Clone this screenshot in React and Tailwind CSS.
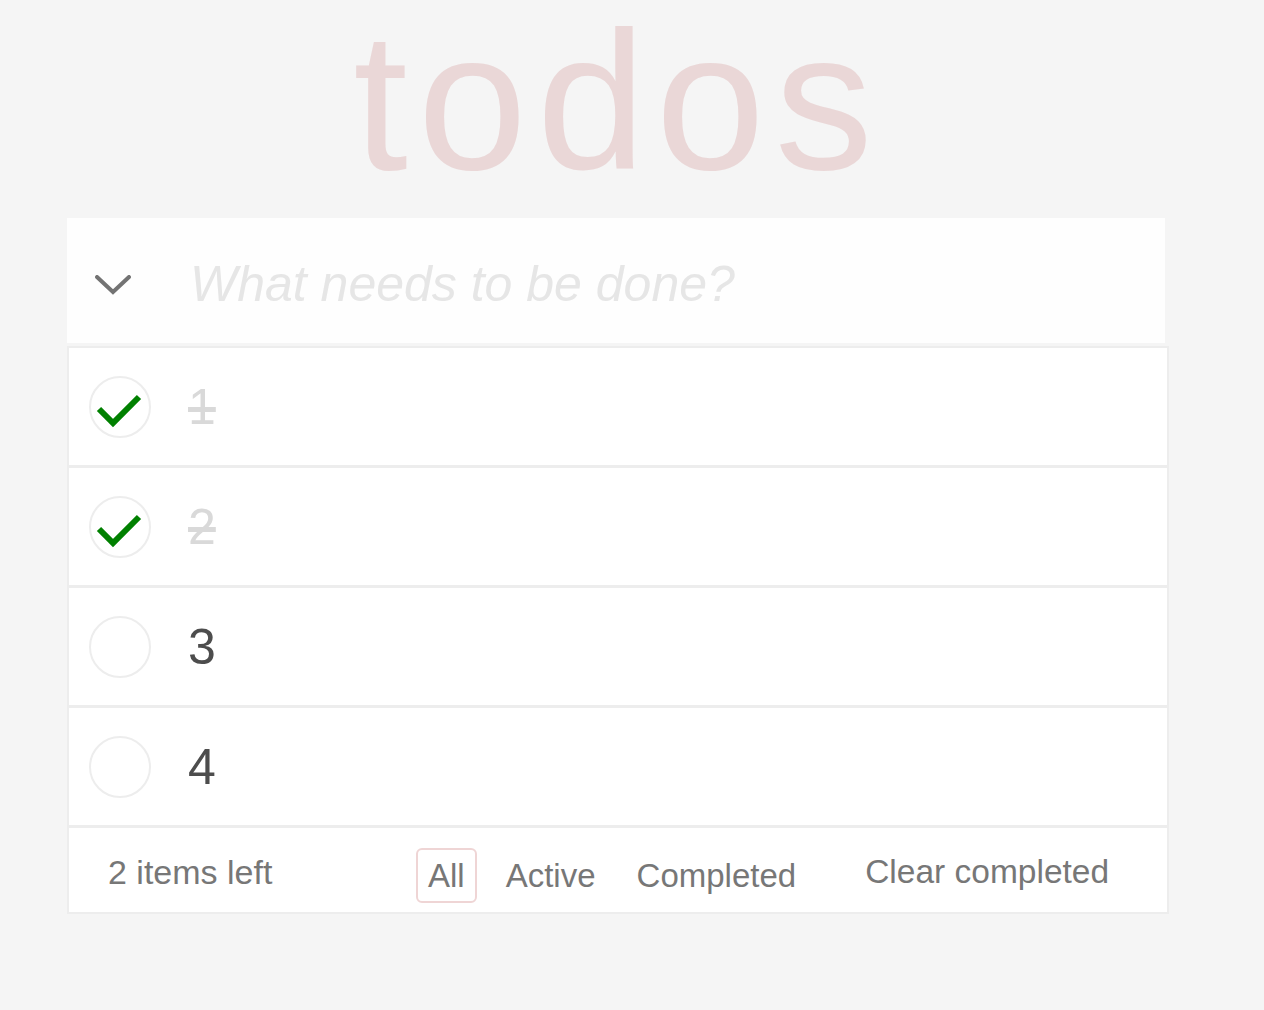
import React from 'react';

const todos = [
  { id: 1, title: '1', completed: true },
  { id: 2, title: '2', completed: true },
  { id: 3, title: '3', completed: false },
  { id: 4, title: '4', completed: false },
];

const CheckCircle = ({ checked }) => (
  <div className="w-[62px] h-[62px] shrink-0 rounded-full border-2 border-[#ededed]">
    {checked && (
      <svg width="58" height="58" viewBox="0 0 58 58" fill="none">
        <path d="M8 31 L22 45 L48 19" stroke="#008000" strokeWidth="6" />
      </svg>
    )}
  </div>
);

const TodoItem = ({ todo }) => (
  <li className="h-[120px] flex items-center pl-[20px] border-b-[3px] border-[#ededed] bg-white">
    <CheckCircle checked={todo.completed} />
    <span
      className={`ml-[37px] text-[50px] leading-none ${
        todo.completed ? 'text-[#d9d9d9] line-through' : 'text-[#4d4d4d]'
      }`}
    >
      {todo.title}
    </span>
  </li>
);

export default function App() {
  return (
    <div className="min-h-[1010px] bg-[#f5f5f5] pl-[67px] font-['Liberation_Sans',Arial,sans-serif]">
      <div className="w-[1102px]">
        {/* Header */}
        <h1 className="text-center text-[196px] tracking-[10px] leading-[204px] text-[#ead7d7] mb-[14px]">todos</h1>

        {/* New todo */}
        <div className="mr-[4px] h-[125px] bg-[#fefefe] flex items-center">
          <svg className="ml-[28px] mt-[9px]" width="36" height="20" viewBox="0 0 36 20" fill="none">
            <path d="M2 2 L18 17 L34 2" stroke="#737373" strokeWidth="4" strokeLinecap="round" />
          </svg>
          <span className="ml-[59px] mt-[6px] text-[50px] italic text-[#e6e6e6] leading-none">
            What needs to be done?
          </span>
        </div>

        {/* List */}
        <div className="mt-[3px] border-2 border-[#ededed] bg-white">
          <ul>
            {todos.map((todo) => (
              <TodoItem key={todo.id} todo={todo} />
            ))}
          </ul>

          {/* Footer */}
          <div className="h-[84px] flex items-center pl-[39px] pt-[3px] text-[34px] text-[#777] leading-none">
            <span className="w-[308px]">2 items left</span>
            <ul className="flex gap-[17px] mt-[7px] text-[33px]">
              <li className="border-2 border-[#efd5d5] rounded-[6px] px-[10px] py-[9px]">All</li>
              <li className="border-2 border-transparent rounded-[6px] px-[10px] py-[9px]">Active</li>
              <li className="border-2 border-transparent rounded-[6px] px-[10px] py-[9px]">Completed</li>
            </ul>
            <span className="ml-[57px] text-[33.5px]">Clear completed</span>
          </div>
        </div>
      </div>
    </div>
  );
}
